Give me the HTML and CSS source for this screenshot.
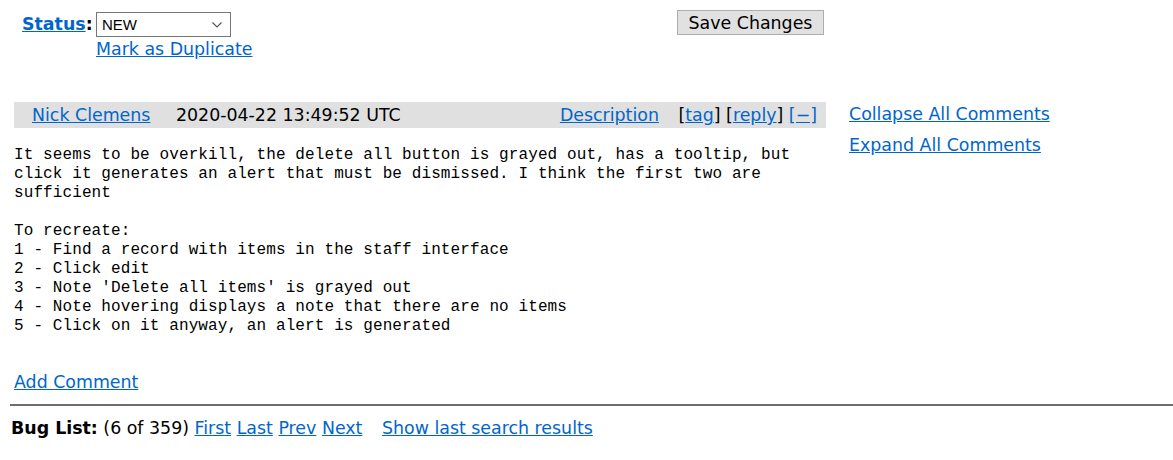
FILE: index.html
```html
<!DOCTYPE html>
<html>
<head>
<meta charset="utf-8">
<link rel="stylesheet" href="styles.css">
</head>
<body>
<div class="top">
  <div class="status-block">
    <div class="status-label"><a href="#" class="bold-link">Status</a>:</div>
    <div class="status-controls">
      <div class="select"><span>NEW</span>
        <svg class="chev" width="10" height="6" viewBox="0 0 10 6"><path d="M0.5 0.5 L5 5 L9.5 0.5" fill="none" stroke="#555" stroke-width="1.1"/></svg>
      </div>
      <a href="#" class="dup">Mark as Duplicate</a>
    </div>
  </div>
  <div class="save-wrap"><button class="save">Save Changes</button></div>
</div>

<div class="main">
  <div class="comments">
    <div class="comment-head">
      <div class="head-left">
        <a href="#" class="author">Nick Clemens</a>
        <span class="date">2020-04-22 13:49:52 UTC</span>
      </div>
      <div class="head-right">
        <a href="#" class="desc">Description</a>
        <span class="actions">[<a href="#">tag</a>] [<a href="#">reply</a>] <a href="#">[−]</a></span>
      </div>
    </div>
<pre class="comment-text">It seems to be overkill, the delete all button is grayed out, has a tooltip, but
click it generates an alert that must be dismissed. I think the first two are
sufficient

To recreate:
1 - Find a record with items in the staff interface
2 - Click edit
3 - Note 'Delete all items' is grayed out
4 - Note hovering displays a note that there are no items
5 - Click on it anyway, an alert is generated</pre>
    <div class="add"><a href="#">Add Comment</a></div>
  </div>
  <div class="side">
    <a href="#">Collapse All Comments</a>
    <a href="#">Expand All Comments</a>
  </div>
</div>
<div class="rule"></div>
<div class="buglist">
  <b>Bug List:</b> (6 of 359) <a href="#">First</a> <a href="#">Last</a> <a href="#">Prev</a> <a href="#">Next</a> <a href="#" class="gap">Show last search results</a>
</div>
</body>
</html>
```
FILE: styles.css
```css
html, body {
  margin: 0;
  padding: 0;
  background: #fff;
}
body {
  font-family: "DejaVu Sans", Verdana, sans-serif;
  font-size: 17.4px;
  color: #000;
  width: 1173px;
  overflow: hidden;
}
a {
  color: #0066cc;
  text-decoration: underline;
}
.top {
  display: flex;
  padding: 10px 0 0 22px;
  height: 102px;
  box-sizing: border-box;
}
.status-block {
  display: flex;
  align-items: flex-start;
  width: 655px;
}
.status-label {
  font-weight: bold;
  padding-top: 3px;
  width: 74px;
  line-height: 22px;
}
.bold-link {
  font-weight: bold;
}
.status-controls {
  display: flex;
  flex-direction: column;
  padding-top: 2px;
}
.select {
  width: 135px;
  height: 25px;
  box-sizing: border-box;
  border: 1px solid #767676;
  display: flex;
  align-items: center;
  justify-content: space-between;
  padding: 0 8px 0 5px;
  font-family: "Liberation Sans", Arial, sans-serif;
  font-size: 15px;
}
.dup {
  line-height: 24px;
}
.save {
  width: 147px;
  height: 25px;
  background: #e1e1e1;
  border: 1px solid #adadad;
  font-family: "DejaVu Sans", Verdana, sans-serif;
  font-size: 17.4px;
  padding: 0;
  color: #000;
  line-height: 20px;
}
.main {
  display: flex;
  padding-left: 14px;
}
.comments {
  width: 812px;
}
.comment-head {
  background: #e0e0e0;
  height: 26px;
  display: flex;
  justify-content: space-between;
  align-items: center;
  padding: 0 9px 0 18px;
}
.date {
  margin-left: 20px;
}
.desc {
  margin-right: 14px;
}
.comment-text {
  font-family: "Liberation Mono", "Courier New", monospace;
  font-size: 16px;
  line-height: 19px;
  margin: 18px 0 0 0;
  letter-spacing: 0.1px;
}
.add {
  margin-top: 36px;
  line-height: 20px;
}
.side {
  display: flex;
  flex-direction: column;
  margin-left: 23px;
  margin-top: 2px;
  gap: 11px;
  line-height: 20px;
}
.rule {
  margin: 12px 0 0 10px;
  height: 2px;
  background: #6e6e6e;
}
.buglist {
  margin: 12px 0 0 11px;
  line-height: 20px;
}
.gap {
  margin-left: 14px;
}
```
